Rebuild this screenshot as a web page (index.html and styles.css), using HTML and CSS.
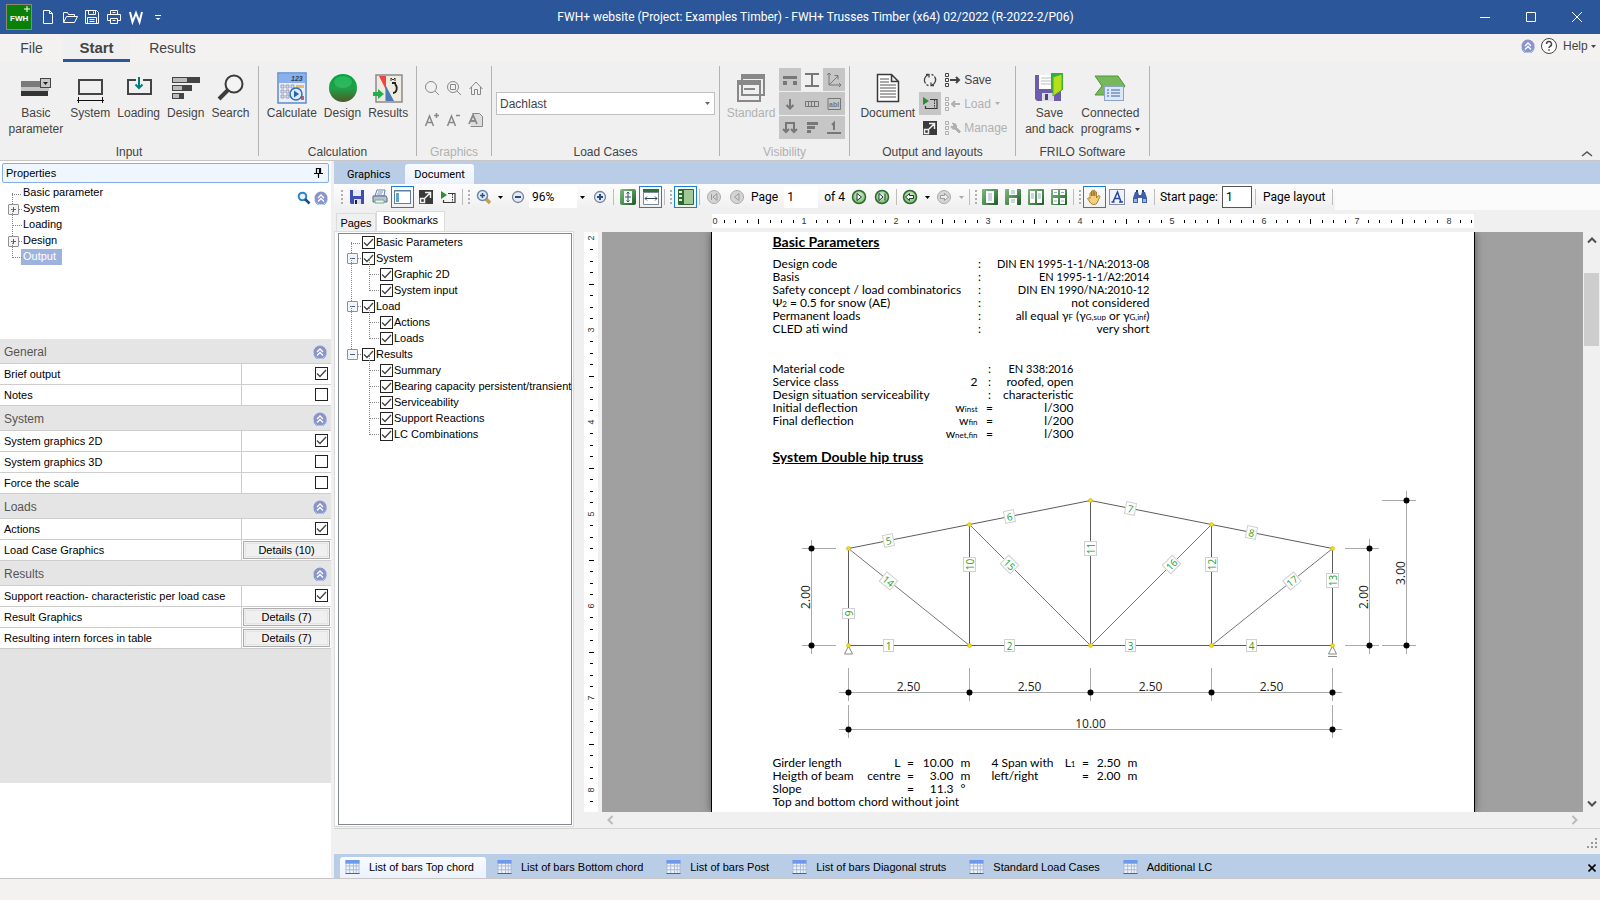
FILE: index.html
```html
<!DOCTYPE html>
<html lang="en">
<head>
    <meta charset="UTF-8">
    <meta name="viewport" content="width=device-width, initial-scale=1.0">
    <title>FWH+ Trusses Timber</title>
    <link rel="stylesheet" href="styles.css">
</head>
<body>
    <!-- shared symbols -->
    <svg class="defs" aria-hidden="true">
        <defs>
            <linearGradient id="gGreen" x1="0" y1="0" x2="1" y2="1"><stop offset="0" stop-color="#7fb87c"/><stop offset=".5" stop-color="#4f9355"/><stop offset="1" stop-color="#1f5524"/></linearGradient>
            <linearGradient id="gBall" x1="0" y1="0" x2="0" y2="1"><stop offset="0" stop-color="#00a43c"/><stop offset=".5" stop-color="#1fa14a"/><stop offset="1" stop-color="#4f5a24"/></linearGradient>
            <radialGradient id="gNav" cx=".5" cy=".4" r=".6"><stop offset="0" stop-color="#e4f5df"/><stop offset="1" stop-color="#6fb85f"/></radialGradient>
        </defs>
        <symbol id="collapse" viewBox="0 0 14 14">
            <circle cx="7" cy="7" r="6.500" fill="#8b93cb"/><path d="M1 9a6 6 0 0 0 12-1" fill="none" stroke="#6fa3dc"/>
            <path d="M4 7l3-3 3 3M4 10.500l3-3 3 3" fill="none" stroke="#fff" stroke-width="1.300"/>
        </symbol>
        <symbol id="sheet" viewBox="0 0 15 15">
            <rect width="15" height="15" fill="#a9b9d6"/><rect width="15" height="4" fill="#6d99ea"/>
            <path d="M1 4h3v2H1zM5 4h3v2H5zM9 4h2v2H9zM12 4h2v2h-2zM1 7h3v3H1zM5 7h3v3H5zM9 7h2v3H9zM12 7h2v3h-2zM1 11h3v3H1zM5 11h3v3H5zM9 11h2v3H9zM12 11h2v3h-2z" fill="#eef3fc"/>
            <path d="M0 14.500h15" stroke="#3c5a8c"/>
        </symbol>
        <symbol id="caret" viewBox="0 0 5 3"><path d="M0 0h5L2.500 3z" fill="currentColor"/></symbol>
        <symbol id="list" viewBox="0 0 14 14">
            <path d="M.5.500h3v3h-3zM.5 5.500h3v3h-3zM.5 10.500h3v3h-3z" fill="none" stroke="currentColor"/>
        </symbol>
        <symbol id="expand" viewBox="0 0 14 14">
            <path d="M0 0h14v14H0z" fill="#3a3a3a"/><path d="M1.500 8.500h4v4h-4zM6 8l5-5M6 2.500h5.500V8" fill="none" stroke="#f0f0f0" stroke-width="1.500"/>
        </symbol>
        <symbol id="screen" viewBox="0 0 15 13">
            <path d="M0 0v8l6-4z" fill="#2f8b37"/><path d="M7 2.500h7v9H2.500V9" fill="none" stroke="#3a3a3a" stroke-width="1.200"/><path d="M11.500 3v8" stroke="#3a3a3a" stroke-dasharray="1.500 1"/>
        </symbol>
    </svg>

    <header class="titlebar">
        <div class="quick">
            <svg class="logo" viewBox="0 0 26 26"><rect x=".5" y=".5" width="25" height="25" fill="#0b8009" stroke="#8a8a72"/><text x="4" y="17" fill="#fff" font-size="8" font-weight="bold">FWH</text><path d="M21 2v6M18 5h6" stroke="#fff"/></svg>
            <button title="New"><svg width="16" height="16" viewBox="0 0 16 16"><path d="M3.500 1.500h6l3 3v10h-9zM9.500 1.500v3h3" /></svg></button>
            <button title="Open"><svg width="16" height="16" viewBox="0 0 16 16"><path d="M1.500 13.500v-10h4l1 2h6v2M1.500 13.500l3-6h11l-3 6z"/></svg></button>
            <button title="Save"><svg width="16" height="16" viewBox="0 0 16 16"><path d="M1.500 1.500h11l2 2v11h-13zM4.500 1.500v4h7v-4M9.500 2.500v2M3.500 14.500v-6h9v6M5.500 10.500h5M5.500 12.500h5"/></svg></button>
            <button title="Print"><svg width="16" height="16" viewBox="0 0 16 16"><path d="M4.500 5.500v-4h7v4M4.500 11.500h-3v-6h13v6h-3M4.500 9.500h7v5h-7zM6.500 11.500h3M6.500 3.500h3"/></svg></button>
            <button title="Word"><svg width="16" height="16" viewBox="0 0 16 16"><path d="M2 3l2.500 10L8 4l3.500 9L14 3" stroke-width="2"/></svg></button>
            <button title="Customize"><svg width="16" height="16" viewBox="0 0 16 16"><path d="M5 6.500h6"/><path d="M5.500 9h5L8 11z" fill="#fff" stroke="none"/></svg></button>
        </div>
        <h1 class="title">FWH+ website (Project: Examples Timber) - FWH+ Trusses Timber (x64) 02/2022 (R-2022-2/P06)</h1>
        <div class="window-buttons">
            <button title="Minimize"><svg width="12" height="12" viewBox="0 0 12 12"><path d="M1 6.500h10"/></svg></button>
            <button title="Maximize"><svg width="12" height="12" viewBox="0 0 12 12"><path d="M1.500 1.500h9v9h-9z"/></svg></button>
            <button title="Close"><svg width="12" height="12" viewBox="0 0 12 12"><path d="M1 1l10 10M11 1L1 11"/></svg></button>
        </div>
    </header>

    <nav class="ribbon-tabs">
        <button>File</button>
        <button class="active">Start</button>
        <button>Results</button>
        <div class="help">
            <svg width="14" height="14"><use href="#collapse"/></svg>
            <svg width="18" height="18" viewBox="0 0 18 18"><circle cx="9" cy="9" r="7.500" fill="#fff" stroke="#444"/><path d="M6.500 7a2.500 2.500 0 1 1 3.500 2.300c-.8.400-1 .7-1 1.700M9 12.300v1.500" fill="none" stroke="#444" stroke-width="1.500"/></svg>
            <button>Help <svg class="caret"><use href="#caret"/></svg></button>
        </div>
    </nav>

    <section class="ribbon">
        <div class="group input">
            <div class="items">
                <button class="big"><svg viewBox="0 0 32 32"><path d="M1 9h19v6H1z" fill="#7a7a7a"/><path d="M1 15h28v4H1z" fill="#c4c4c4"/><path d="M1 19h27v5H1z" fill="#333"/><rect x="20.500" y="6.500" width="10" height="9" fill="#c8c8c8" stroke="#444"/><path d="M23 10h5l-2.500 3z" fill="#222"/></svg>Basic<br>parameter</button>
                <button class="big"><svg viewBox="0 0 32 32"><rect x="5" y="8" width="23" height="14" fill="none" stroke="#444" stroke-width="2"/><path d="M3 28.500h27M4.500 25v6M28.500 25v6" stroke="#111"/></svg>System</button>
                <button class="big"><svg viewBox="0 0 32 32"><path d="M13 8H5v14h23V8h-8" fill="none" stroke="#444" stroke-width="2"/><path d="M16 5v11M12.500 12.500L16 16l3.500-3.500" fill="none" stroke="#007c7c" stroke-width="2"/></svg>Loading</button>
                <button class="big"><svg viewBox="0 0 32 32"><path d="M2 5h28v6H2zM2 13h20v6H2zM2 21h12v6H2z" fill="#444"/><path d="M3 6h14v4H3zM3 14h9v4H3zM3 22h6v4H3z" fill="#bbb"/></svg>Design</button>
                <button class="big"><svg viewBox="0 0 32 32"><circle cx="20" cy="12" r="8.500" fill="#f4f4f4" stroke="#3c3c3c" stroke-width="2"/><path d="M14 18L5 27" stroke="#3c3c3c" stroke-width="4"/></svg>Search</button>
            </div>
            <span class="caption">Input</span>
        </div>
        <div class="group calculation">
            <div class="items">
                <button class="big"><svg viewBox="0 0 32 32"><rect x="2" y="1" width="28" height="30" fill="#e8effa" stroke="#5a8ad0" stroke-width="1.500"/><path d="M3 2h26v9H3z" fill="#8ab1ef"/><text x="15" y="9" font-size="7" font-style="italic" font-weight="bold" fill="#345">123</text><path d="M5 13h3v3H5zM10 13h3v3h-3zM15 13h3v3h-3zM5 18h3v3H5zM10 18h3v3h-3zM5 23h3v3H5zM10 23h3v3h-3z" fill="#dde" stroke="#889" stroke-width=".7"/><path d="M20 13h8v3h-8z" fill="#e9b96e"/><path d="M25 24h3v4h-3z" fill="#d55"/><circle cx="20" cy="22" r="6" fill="#dcecff" stroke="#2e6fb5" stroke-width="1.500"/><path d="M18 18.500v7l5-3.500z" fill="#2864a8"/></svg>Calculate</button>
                <button class="big"><svg viewBox="0 0 32 32"><circle cx="16" cy="16" r="14" fill="url(#gBall)"/><ellipse cx="16" cy="10" rx="9" ry="6" fill="#49d07c" opacity=".45"/></svg>Design</button>
                <button class="big"><svg viewBox="0 0 32 32"><rect x="4" y="3" width="26" height="27" fill="#efebdf" stroke="#8a8a8a" stroke-width="1.500"/><path d="M13.500 3v26" stroke="#aaa"/><path d="M7 4h7v14z" fill="#ef4444"/><path d="M14 14v15h8z" fill="#4a7ab8"/><path d="M19 9V6l2 2 2-2v3" fill="none" stroke="#333"/><path d="M23 12c3 3 2 9-2 9M24 11h-4" fill="none" stroke="#222" stroke-width="1.800"/><path d="M1 20h5v-3l6 5-6 5v-3H1z" fill="#22b04b"/></svg>Results</button>
            </div>
            <span class="caption">Calculation</span>
        </div>
        <div class="group graphics disabled">
            <div class="small-grid">
                <button title="Zoom" disabled><svg width="16" height="16" viewBox="0 0 16 16"><circle cx="7" cy="7" r="5.500"/><path d="M11 11l4 4"/></svg></button>
                <button title="Zoom window" disabled><svg width="16" height="16" viewBox="0 0 16 16"><circle cx="7" cy="7" r="5.500"/><path d="M11 11l4 4M4.500 4.500h5v5h-5z"/></svg></button>
                <button title="Home" disabled><svg width="16" height="16" viewBox="0 0 16 16"><path d="M1.500 9L8 2l6.500 7M3.500 7v7.500h3v-5h3v5h3V7"/></svg></button>
                <button title="Larger font" disabled><svg width="16" height="16" viewBox="0 0 16 16"><path d="M1.500 14l4-10 4 10M3 10.500h5M10 3.500h5M12.500 1v5" stroke-width="1.500"/></svg></button>
                <button title="Smaller font" disabled><svg width="16" height="16" viewBox="0 0 16 16"><path d="M1.500 14l4-10 4 10M3 10.500h5M10 3.500h4" stroke-width="1.500"/></svg></button>
                <button title="Font" disabled><svg width="16" height="16" viewBox="0 0 16 16"><path d="M4.500 1.500h7l3 3v10h-12" fill="#ddd"/><path d="M1 12l4-9 4 9M2.500 9h5" stroke-width="1.800"/></svg></button>
            </div>
            <span class="caption">Graphics</span>
        </div>
        <div class="group cases">
            <select aria-label="Load case"><option>Dachlast</option></select>
            <span class="caption">Load Cases</span>
        </div>
        <div class="group visibility disabled">
            <div class="items">
                <button class="big" disabled><svg viewBox="0 0 32 32"><rect x="7" y="3" width="22" height="20" fill="none" stroke="#888" stroke-width="2"/><path d="M7 5h22" stroke="#888" stroke-width="4"/><rect x="3" y="9" width="22" height="20" fill="none" stroke="#888" stroke-width="2"/><path d="M3 11h22" stroke="#888" stroke-width="4"/><path d="M9 17h11" stroke="#888" stroke-width="2"/></svg>Standard</button>
                <div class="toggles">
                    <button title="Supports" disabled><svg width="16" height="16" viewBox="0 0 16 16"><path d="M1 4h14v3H1zM1 9h4v4H1zM11 9h4v4h-4z" fill="#777" stroke="none"/></svg></button>
                    <button class="off" title="Section" disabled><svg width="16" height="16" viewBox="0 0 16 16"><path d="M1 2h14M1 14h14M8 2v12" stroke-width="2"/></svg></button>
                    <button title="Axes" disabled><svg width="16" height="16" viewBox="0 0 16 16"><path d="M3 1v12h12M1 3l2-2 2 2M13 11l2 2-2 2M3 13l9-9M8.500 3.500H12v4"/></svg></button>
                    <button title="Load" disabled><svg width="16" height="16" viewBox="0 0 16 16"><path d="M8 3v10M4.500 9L8 12.500 11.500 9" stroke-width="2"/></svg></button>
                    <button title="Dimensions" disabled><svg width="16" height="16" viewBox="0 0 16 16"><path d="M1.500 5.500h13v5h-13zM4.500 6v4M7.500 6v4M10.500 6v4"/></svg></button>
                    <button title="Labels" disabled><svg width="16" height="16" viewBox="0 0 16 16"><path d="M2 2.500h12.500v11H2z"/><text x="3" y="11" font-size="7" font-weight="bold">abl</text></svg></button>
                    <button title="Reactions" disabled><svg width="16" height="16" viewBox="0 0 16 16"><path d="M4 10V3h8v7M1 9l3 3 3-3M9 9l3 3 3-3" stroke-width="2"/></svg></button>
                    <button title="Results" disabled><svg width="16" height="16" viewBox="0 0 16 16"><path d="M3 2h11v3H3zM3 6h8v3H3zM3 10h4v3H3z" fill="#777" stroke="none"/></svg></button>
                    <button title="Numbers" disabled><svg width="16" height="16" viewBox="0 0 16 16"><path d="M1 13h14M6 5l2-2v7" stroke-width="2"/></svg></button>
                </div>
            </div>
            <span class="caption">Visibility</span>
        </div>
        <div class="group output">
            <div class="items">
                <button class="big"><svg viewBox="0 0 32 32"><path d="M5.500 2.500h14l7 7v20h-21zM19.500 2.500v7h7" fill="#fff" stroke="#3a3a3a" stroke-width="1.500"/><path d="M8 7h9M8 10h9M8 13h16M8 16h16M8 19h16M8 22h16M8 25h16" stroke="#555"/></svg>Document</button>
                <div class="icon-col">
                    <button title="Refresh"><svg width="16" height="16" viewBox="0 0 16 16"><path d="M3.500 11.500A5.500 5.500 0 0 1 6 3M12.500 4.500A5.500 5.500 0 0 1 10 13M4 2.500h3v3M12 13.500H9v-3M9.500 2.500a5.500 5.500 0 0 1 2 1M6.500 13.500a5.500 5.500 0 0 1-2-1" fill="none" stroke="#444" stroke-width="1.300"/></svg></button>
                    <button class="on" title="Preview"><svg width="15" height="13"><use href="#screen"/></svg></button>
                    <button title="Window"><svg width="14" height="14"><use href="#expand"/></svg></button>
                </div>
                <div class="layout-col">
                    <button><svg width="14" height="14"><use href="#list"/></svg><svg width="12" height="12" viewBox="0 0 12 12"><path d="M0 6h9M6 3l3 3-3 3" fill="none" stroke="currentColor" stroke-width="2"/></svg>Save</button>
                    <button disabled><svg width="14" height="14"><use href="#list"/></svg><svg width="12" height="12" viewBox="0 0 12 12"><path d="M10 6H2M5 3L2 6l3 3" fill="none" stroke="currentColor" stroke-width="2"/></svg>Load <svg class="caret"><use href="#caret"/></svg></button>
                    <button disabled><svg width="14" height="14"><use href="#list"/></svg><svg width="12" height="12" viewBox="0 0 12 12"><path d="M2 1l2 2-2 2-1-1a3 3 0 0 0 4 3l4 4 1.500-1.500-4-4a3 3 0 0 0-3.500-4z" fill="currentColor" stroke="currentColor"/></svg>Manage</button>
                </div>
            </div>
            <span class="caption">Output and layouts</span>
        </div>
        <div class="group frilo">
            <div class="items">
                <button class="big"><svg viewBox="0 0 32 32"><path d="M2 3h26v26H4l-2-2z" fill="#6d5cae"/><path d="M6 3h14v14H6z" fill="#fff"/><path d="M8 6h10M8 9h10M8 12h10" stroke="#bbb"/><path d="M9 21h12v8H9z" fill="#ddd"/><path d="M12 22h3v6h-3z" fill="#4d3f8e"/><path d="M18 1h12v17H18z" fill="#27b04b"/><path d="M20 5l9-3v16l-9 6z" fill="#b3e018" stroke="#4fae20"/></svg>Save<br>and back</button>
                <button class="big"><svg viewBox="0 0 32 32"><path d="M1 4h23l7 10-7 9H1l7-9z" fill="#77b85b" stroke="#4e963a"/><rect x="10.500" y="14.500" width="19" height="14" fill="#dbe7f5" stroke="#8aa4c8"/><path d="M13 18h2M13 21h2M13 24h2M17 18h9M17 21h9M17 24h9" stroke="#3f62a5" stroke-width="1.200"/></svg>Connected<br><span>programs <svg class="caret"><use href="#caret"/></svg></span></button>
            </div>
            <span class="caption">FRILO Software</span>
        </div>
        <button class="fold" title="Collapse the ribbon"><svg width="12" height="8" viewBox="0 0 12 8"><path d="M1 6l5-4 5 4" fill="none" stroke="#555" stroke-width="1.500"/></svg></button>
    </section>

    <main class="main">
        <aside class="properties">
            <div class="panel-head"><span>Properties</span><svg width="9" height="12" viewBox="0 0 9 12"><path d="M2.500 6V1.500h4V6M5.500 1.500V6M0 6.500h9M4.500 7v4" fill="none" stroke="#000" stroke-width="1.200"/></svg></div>
            <div class="tree-box">
                <ul class="nav-tree">
                    <li>Basic parameter</li>
                    <li class="plus">System</li>
                    <li>Loading</li>
                    <li class="plus">Design</li>
                    <li><span class="selected">Output</span></li>
                </ul>
                <div class="tree-tools">
                    <svg width="14" height="14" viewBox="0 0 14 14"><circle cx="5.500" cy="5.500" r="3.800" fill="#e8f2fb" stroke="#2f82c4" stroke-width="2"/><path d="M8 8l4.500 4.500" stroke="#1d4a8c" stroke-width="2.500"/></svg>
                    <svg width="14" height="14"><use href="#collapse"/></svg>
                </div>
            </div>
            <div class="settings">
                <h2>General <svg width="14" height="14"><use href="#collapse"/></svg></h2>
                <div class="row"><label for="brief">Brief output</label><div><input type="checkbox" id="brief" checked></div></div>
                <div class="row"><label for="notes">Notes</label><div><input type="checkbox" id="notes"></div></div>
                <h2>System <svg width="14" height="14"><use href="#collapse"/></svg></h2>
                <div class="row"><label for="g2d">System graphics 2D</label><div><input type="checkbox" id="g2d" checked></div></div>
                <div class="row"><label for="g3d">System graphics 3D</label><div><input type="checkbox" id="g3d"></div></div>
                <div class="row"><label for="scale">Force the scale</label><div><input type="checkbox" id="scale"></div></div>
                <h2>Loads <svg width="14" height="14"><use href="#collapse"/></svg></h2>
                <div class="row"><label for="actions">Actions</label><div><input type="checkbox" id="actions" checked></div></div>
                <div class="row"><label for="lcg">Load Case Graphics</label><div><button id="lcg">Details (10)</button></div></div>
                <h2>Results <svg width="14" height="14"><use href="#collapse"/></svg></h2>
                <div class="row"><label for="support">Support reaction- characteristic per load case</label><div><input type="checkbox" id="support" checked></div></div>
                <div class="row"><label for="rg">Result Graphics</label><div><button id="rg">Details (7)</button></div></div>
                <div class="row"><label for="rf">Resulting intern forces in table</label><div><button id="rf">Details (7)</button></div></div>
            </div>
            <div class="hint"></div>
        </aside>

        <section class="workspace">
            <nav class="view-tabs">
                <button>Graphics</button>
                <button class="active">Document</button>
            </nav>

            <div class="toolbar-row">
                <div class="toolbar">
                    <i class="grip"></i>
                    <button title="Save"><svg width="16" height="16" viewBox="0 0 16 16"><path d="M1 1h14v14H2l-1-1z" fill="#3d4fb0"/><path d="M4 1h8v6H4z" fill="#e6eaf8"/><path d="M5 10h7v5H5z" fill="#dde"/><path d="M6 11h2v4H6z" fill="#223"/></svg></button>
                    <button title="Print"><svg width="16" height="16" viewBox="0 0 16 16"><path d="M5 1h8l-1 6H3z" fill="#fff" stroke="#6b7fa3"/><path d="M1 7h13l1 2v4H1z" fill="#b9c2d2" stroke="#5a6a88"/><path d="M3 11h9v3H3z" fill="#f4f4f4" stroke="#7a8"/><path d="M6 3h5M5 5h5" stroke="#6a90c8"/></svg></button>
                    <button class="on" title="Panel"><svg width="17" height="16" viewBox="0 0 17 16"><rect x=".5" y="1.500" width="16" height="13" fill="#fff" stroke="#5f7f9e"/><path d="M1 2h15v1H1z" fill="#a9c0d8"/><path d="M2 4h3v9H2z" fill="#5ea7cc"/></svg></button>
                    <button title="Window"><svg width="14" height="14"><use href="#expand"/></svg></button>
                    <button title="Preview"><svg width="15" height="13"><use href="#screen"/></svg></button>
                    <i class="sep"></i><i class="grip"></i>
                    <button title="Zoom"><svg width="16" height="16" viewBox="0 0 16 16"><path d="M9 9l5 5" stroke="#c9a04a" stroke-width="3.500"/><circle cx="6.500" cy="6.500" r="5" fill="#dfeaf8" stroke="#6f87a8" stroke-width="1.500"/><path d="M4 6.500h5M6.500 4v5" stroke="#2f4f8c" stroke-width="1.500"/></svg></button>
                    <svg class="caret"><use href="#caret"/></svg>
                    <button title="Zoom out"><svg width="14" height="14" viewBox="0 0 14 14"><circle cx="7" cy="7" r="5.500" fill="#e3ebf6" stroke="#7a8496" stroke-width="1.300"/><path d="M4 7h6" stroke="#2b4a88" stroke-width="2"/></svg></button>
                    <input class="zoom" aria-label="Zoom level" value="96%">
                    <svg class="caret"><use href="#caret"/></svg>
                    <button title="Zoom in"><svg width="14" height="14" viewBox="0 0 14 14"><circle cx="7" cy="7" r="5.500" fill="#e3ebf6" stroke="#7a8496" stroke-width="1.300"/><path d="M4 7h6M7 4v6" stroke="#2b4a88" stroke-width="2"/></svg></button>
                    <i class="sep"></i>
                    <button title="Fit page"><svg width="16" height="16" viewBox="0 0 16 16"><rect width="16" height="16" rx="2" fill="url(#gGreen)"/><path d="M4 2h8v12H4z" fill="#f3f6f1"/><path d="M8 3v10M5 8h6M6.500 4.500L8 3l1.500 1.500M6.500 11.500L8 13l1.500-1.500" fill="none" stroke="#357"/></svg></button>
                    <button class="on" title="Fit width"><svg width="16" height="16" viewBox="0 0 16 16"><rect width="16" height="4" fill="#2f7036"/><path d="M.5 3.500h15v12H.500z" fill="#fff" stroke="#7a8a98"/><path d="M2 9.500h12M4 7.500l-2 2 2 2M12 7.500l2 2-2 2" fill="none" stroke="#345"/></svg></button>
                    <i class="sep"></i><i class="grip"></i>
                    <button class="on" title="Thumbnails"><svg width="16" height="16" viewBox="0 0 16 16"><rect width="16" height="16" rx="1" fill="#2c6a33"/><path d="M6 1h9v14H6z" fill="#9fca98"/><path d="M1 2h3v2H1zM1 6h3v2H1zM1 10h3v2H1z" fill="#dfeeda"/></svg></button>
                    <i class="sep"></i>
                    <button title="First page" disabled><svg width="16" height="16" viewBox="0 0 16 16"><circle cx="8" cy="8" r="6.500" fill="#d5d5d5" stroke="#aaa"/><path d="M5.500 5v6M11 4.500v7L7 8z" fill="none" stroke="#999"/></svg></button>
                    <button title="Previous page" disabled><svg width="16" height="16" viewBox="0 0 16 16"><circle cx="8" cy="8" r="6.500" fill="#d5d5d5" stroke="#aaa"/><path d="M10 4.500v7L5.500 8z" fill="none" stroke="#999"/></svg></button>
                    <label for="page">Page</label>
                    <input class="page-no" id="page" value="1">
                    <span>of 4</span>
                    <button title="Next page"><svg width="16" height="16" viewBox="0 0 16 16"><circle cx="8" cy="8" r="6.500" fill="url(#gNav)" stroke="#2c6b2c" stroke-width="1.500"/><path d="M6 4.500v7L10.500 8z" fill="#fff" stroke="#234"/></svg></button>
                    <button title="Last page"><svg width="16" height="16" viewBox="0 0 16 16"><circle cx="8" cy="8" r="6.500" fill="url(#gNav)" stroke="#2c6b2c" stroke-width="1.500"/><path d="M5 4.500v7L9 8zM11 4.500v7" fill="#fff" stroke="#234"/></svg></button>
                    <i class="sep"></i>
                    <button title="Back"><svg width="16" height="16" viewBox="0 0 16 16"><circle cx="8" cy="8" r="6.500" fill="url(#gNav)" stroke="#2c6b2c" stroke-width="1.500"/><path d="M3.500 8L7.500 4.500v2h4v3h-4v2z" fill="#fff" stroke="#234"/></svg></button>
                    <svg class="caret"><use href="#caret"/></svg>
                    <button title="Forward" disabled><svg width="16" height="16" viewBox="0 0 16 16"><circle cx="8" cy="8" r="6.500" fill="#d5d5d5" stroke="#aaa"/><path d="M12.500 8l-4-3.500v2h-4v3h4v2z" fill="#eee" stroke="#999"/></svg></button>
                    <svg class="caret off"><use href="#caret"/></svg>
                    <i class="sep"></i><i class="grip"></i>
                    <button title="Single page"><svg width="16" height="16" viewBox="0 0 16 16"><rect width="16" height="16" rx="1" fill="url(#gGreen)"/><path d="M4 2h8v12H4z" fill="#fff"/><path d="M6 5h4M6 7h4M6 9h4M6 11h4" stroke="#9ab"/></svg></button>
                    <button title="Continuous"><svg width="16" height="16" viewBox="0 0 16 16"><rect width="16" height="16" rx="1" fill="url(#gGreen)"/><path d="M4 0h8v6H4zM4 9h8v7H4z" fill="#fff"/><path d="M6 2h4M6 4h4M6 11h4M6 13h4" stroke="#9ab"/></svg></button>
                    <button title="Two pages"><svg width="16" height="16" viewBox="0 0 16 16"><rect width="16" height="16" rx="1" fill="url(#gGreen)"/><path d="M2 2h5v12H2zM9 2h5v12H9z" fill="#fff"/><path d="M3 5h3M3 7h3M3 9h3M10 5h3M10 7h3M10 9h3" stroke="#9ab"/></svg></button>
                    <button title="Two pages continuous"><svg width="16" height="16" viewBox="0 0 16 16"><rect width="16" height="16" rx="1" fill="url(#gGreen)"/><path d="M2 1h5v5H2zM9 1h5v5H9zM2 9h5v6H2zM9 9h5v6H9z" fill="#fff"/><path d="M3 3.500h3M10 3.500h3M3 12h3M10 12h3" stroke="#9ab"/></svg></button>
                    <i class="sep"></i><i class="grip"></i>
                    <button class="on" title="Hand"><svg width="16" height="16" viewBox="0 0 16 16"><path d="M4 9V4q1-1 1.500 0v3V2q1-1 1.600 0v5V1.500q1-1 1.700 0V7 3q1-1 1.700 0v6l1.500-2q1.500-1 2 .500L11 14q-1 1.500-3 1.500T4.500 14L1.500 9.500q1-1.500 2.500 0z" fill="#f6cf7a" stroke="#9b6a1c" stroke-width=".8"/></svg></button>
                    <button title="Select text"><svg width="16" height="16" viewBox="0 0 16 16"><rect x=".5" y=".5" width="15" height="15" fill="#eef3fb" stroke="#225" stroke-dasharray="1 1"/><path d="M4 13l4.500-10 3.500 10M6 9.500h5M2.500 13h3M10 13h4" fill="none" stroke="#27479a" stroke-width="1.500"/></svg></button>
                    <button title="Find"><svg width="16" height="16" viewBox="0 0 16 16"><path d="M3 3h3l1 3h2l1-3h3l2 6v5h-5V9H6v5H1V9z" fill="#3f5fa6"/><path d="M2 10h3v3H2zM11 10h3v3h-3z" fill="#9fb6e2"/><path d="M4 1h2v2H4zM10 1h2v2h-2z" fill="#27407c"/></svg></button>
                    <i class="sep"></i>
                    <label for="start">Start page:</label>
                    <input class="start-no" id="start" value="1">
                    <i class="sep"></i>
                    <button class="text">Page layout</button>
                    <i class="sep"></i>
                </div>
            </div>

            <div class="content">
                <div class="bookmarks">
                    <nav class="side-tabs"><button>Pages</button><button class="active">Bookmarks</button></nav>
                    <div class="side-frame">
                        <ul class="mark-tree">
                            <li><label><input type="checkbox" checked>Basic Parameters</label></li>
                            <li class="minus"><label><input type="checkbox" checked>System</label>
                                <ul>
                                    <li><label><input type="checkbox" checked>Graphic 2D</label></li>
                                    <li><label><input type="checkbox" checked>System input</label></li>
                                </ul>
                            </li>
                            <li class="minus"><label><input type="checkbox" checked>Load</label>
                                <ul>
                                    <li><label><input type="checkbox" checked>Actions</label></li>
                                    <li><label><input type="checkbox" checked>Loads</label></li>
                                </ul>
                            </li>
                            <li class="minus"><label><input type="checkbox" checked>Results</label>
                                <ul>
                                    <li><label><input type="checkbox" checked>Summary</label></li>
                                    <li><label><input type="checkbox" checked>Bearing capacity persistent/transient</label></li>
                                    <li><label><input type="checkbox" checked>Serviceability</label></li>
                                    <li><label><input type="checkbox" checked>Support Reactions</label></li>
                                    <li><label><input type="checkbox" checked>LC Combinations</label></li>
                                </ul>
                            </li>
                        </ul>
                    </div>
                </div>

                <div class="preview">
                    <div class="ruler-h">
                        <svg width="762" height="14" viewBox="0 0 762 14">
                            <defs><pattern id="tickH" width="92" height="14" patternUnits="userSpaceOnUse"><path d="M12.500 6v3M23.500 6v3M35.500 6v3M46.500 5v5M58.500 6v3M69.500 6v3M81.500 6v3" stroke="#000"/></pattern></defs>
                            <rect width="762" height="14" fill="#fff"/><rect width="762" height="14" fill="url(#tickH)"/>
                            <g font-size="9" text-anchor="middle" fill="#333"><text x="3" y="10">0</text><text x="92" y="10">1</text><text x="184" y="10">2</text><text x="276" y="10">3</text><text x="368" y="10">4</text><text x="460" y="10">5</text><text x="552" y="10">6</text><text x="645" y="10">7</text><text x="737" y="10">8</text></g>
                        </svg>
                    </div>
                    <div class="ruler-v">
                        <svg width="14" height="100%">
                            <defs><pattern id="tickV" y="6" width="14" height="92" patternUnits="userSpaceOnUse"><path d="M6 11.500h3M6 23.500h3M6 34.500h3M5 46.500h5M6 57.500h3M6 69.500h3M6 80.500h3" stroke="#000"/></pattern></defs>
                            <rect width="14" height="100%" fill="#fff"/><rect width="14" height="100%" fill="url(#tickV)"/>
                            <g font-size="9" text-anchor="middle" fill="#333"><text transform="translate(10 6) rotate(-90)">2</text><text transform="translate(10 98) rotate(-90)">3</text><text transform="translate(10 190) rotate(-90)">4</text><text transform="translate(10 282) rotate(-90)">5</text><text transform="translate(10 374) rotate(-90)">6</text><text transform="translate(10 466) rotate(-90)">7</text><text transform="translate(10 558) rotate(-90)">8</text></g>
                        </svg>
                    </div>
                    <div class="canvas">
                        <article class="sheet">
                            <h3>Basic Parameters</h3>
                            <table class="t-basic">
                                <colgroup><col class="c-label"><col class="c-sign"><col class="c-value"></colgroup>
                                <tr><td>Design code</td><td>:</td><td class="code">DIN EN 1995-1-1/NA:2013-08</td></tr>
                                <tr><td>Basis</td><td>:</td><td class="code">EN 1995-1-1/A2:2014</td></tr>
                                <tr><td>Safety concept / load combinatorics</td><td>:</td><td class="code">DIN EN 1990/NA:2010-12</td></tr>
                                <tr><td>Ψ<small>2</small> = 0.5 for snow (AE)</td><td>:</td><td>not considered</td></tr>
                                <tr><td>Permanent loads</td><td>:</td><td>all equal γ<small>F</small> (γ<small>G,sup</small> or γ<small>G,inf</small>)</td></tr>
                                <tr><td>CLED ati wind</td><td>:</td><td>very short</td></tr>
                            </table>
                            <table class="t-material">
                                <colgroup><col class="c-label"><col class="c-symbol"><col class="c-sign"><col class="c-value"></colgroup>
                                <tr><td>Material code</td><td></td><td>:</td><td class="code">EN 338:2016</td></tr>
                                <tr><td>Service class</td><td>2</td><td>:</td><td>roofed, open</td></tr>
                                <tr><td>Design situation serviceability</td><td></td><td>:</td><td>characteristic</td></tr>
                                <tr><td>Initial deflection</td><td>w<small>inst</small></td><td>=</td><td>l/300</td></tr>
                                <tr><td>Final deflection</td><td>w<small>fin</small></td><td>=</td><td>l/200</td></tr>
                                <tr><td></td><td>w<small>net,fin</small></td><td>=</td><td>l/300</td></tr>
                            </table>
                            <h3>System Double hip truss</h3>
                            <svg class="truss" width="660" height="278" viewBox="785 476 660 278">
                                <g stroke="#5c5c5c" fill="none">
                                    <path d="M848.500 645.500H1332.500M848.500 548.500V645.500M969.500 524.500V645.500M1090.500 500.500V645.500M1211.500 524.500V645.500M1332.500 548.500V645.500"/>
                                    <path d="M848.500 548.500L1090.500 500.500 1332.500 548.500"/>
                                    <path d="M848.500 548.500L969.500 645.500M969.500 524.500L1090.500 645.500 1211.500 524.500M1211.500 645.500L1332.500 548.500" stroke="#777"/>
                                    <path d="M848.500 646l-4 8h8zM1332.500 646l-4 8h8zM1328 656.500h9" stroke="#888"/>
                                </g>
                                <g stroke="#aaa" fill="none">
                                    <path d="M811.500 540V654M802 548.500H836M802 645.500H836"/>
                                    <path d="M1369.500 539V654M1345 548.500H1379M1345 645.500H1379"/>
                                    <path d="M1406.500 491V654M1382 500.500H1416M1382 645.500H1416"/>
                                    <path d="M839 692.500H1342M848.500 668V701M969.500 668V701M1090.500 668V701M1211.500 668V701M1332.500 668V701"/>
                                    <path d="M839 729.500H1342M848.500 705V738M1332.500 705V738"/>
                                </g>
                                <g fill="#000">
                                    <circle cx="811.500" cy="548.500" r="3"/><circle cx="811.500" cy="645.500" r="3"/>
                                    <circle cx="1369.500" cy="548.500" r="3"/><circle cx="1369.500" cy="645.500" r="3"/>
                                    <circle cx="1406.500" cy="500.500" r="3"/><circle cx="1406.500" cy="645.500" r="3"/>
                                    <circle cx="848.500" cy="692.500" r="3"/><circle cx="969.500" cy="692.500" r="3"/><circle cx="1090.500" cy="692.500" r="3"/><circle cx="1211.500" cy="692.500" r="3"/><circle cx="1332.500" cy="692.500" r="3"/>
                                    <circle cx="848.500" cy="729.500" r="3"/><circle cx="1332.500" cy="729.500" r="3"/>
                                </g>
                                <g fill="#f7dc10" stroke="#c9a800" stroke-width=".5">
                                    <circle cx="848.500" cy="548.500" r="2"/><circle cx="969.500" cy="524.500" r="2"/><circle cx="1090.500" cy="500.500" r="2"/><circle cx="1211.500" cy="524.500" r="2"/><circle cx="1332.500" cy="548.500" r="2"/>
                                    <circle cx="848.500" cy="645.500" r="2"/><circle cx="969.500" cy="645.500" r="2"/><circle cx="1090.500" cy="645.500" r="2"/><circle cx="1211.500" cy="645.500" r="2"/><circle cx="1332.500" cy="645.500" r="2"/>
                                </g>
                                <g class="dim">
                                    <text x="908.500" y="691">2.50</text><text x="1029.500" y="691">2.50</text><text x="1150.500" y="691">2.50</text><text x="1271.500" y="691">2.50</text><text x="1090.500" y="728">10.00</text>
                                    <text transform="translate(810 597) rotate(-90)">2.00</text><text transform="translate(1368 597) rotate(-90)">2.00</text><text transform="translate(1405 573) rotate(-90)">3.00</text>
                                </g>
                                <g class="bar">
                                    <g transform="translate(888.500 645.500)"><rect x="-5" y="-6" width="10" height="12"/><text y="4">1</text></g>
                                    <g transform="translate(1009.500 645.500)"><rect x="-5" y="-6" width="10" height="12"/><text y="4">2</text></g>
                                    <g transform="translate(1130.500 645.500)"><rect x="-5" y="-6" width="10" height="12"/><text y="4">3</text></g>
                                    <g transform="translate(1251.500 645.500)"><rect x="-5" y="-6" width="10" height="12"/><text y="4">4</text></g>
                                    <g transform="translate(888.500 540.500) rotate(-11)"><rect x="-5" y="-6" width="10" height="12"/><text y="4">5</text></g>
                                    <g transform="translate(1009.500 516.500) rotate(-11)"><rect x="-5" y="-6" width="10" height="12"/><text y="4">6</text></g>
                                    <g transform="translate(1130.500 508.500) rotate(11)"><rect x="-5" y="-6" width="10" height="12"/><text y="4">7</text></g>
                                    <g transform="translate(1251.500 532.500) rotate(11)"><rect x="-5" y="-6" width="10" height="12"/><text y="4">8</text></g>
                                    <g transform="translate(848.500 613.500) rotate(-90)"><rect x="-5" y="-6" width="10" height="12"/><text y="4">9</text></g>
                                    <g transform="translate(969.500 564.500) rotate(-90)"><rect x="-7" y="-6" width="14" height="12"/><text y="4">10</text></g>
                                    <g transform="translate(1090.500 548.500) rotate(-90)"><rect x="-7" y="-6" width="14" height="12"/><text y="4">11</text></g>
                                    <g transform="translate(1211.500 564.500) rotate(-90)"><rect x="-7" y="-6" width="14" height="12"/><text y="4">12</text></g>
                                    <g transform="translate(1332.500 580.500) rotate(-90)"><rect x="-7" y="-6" width="14" height="12"/><text y="4">13</text></g>
                                    <g transform="translate(888.500 581) rotate(39)"><rect x="-7" y="-6" width="14" height="12"/><text y="4">14</text></g>
                                    <g transform="translate(1009.500 564.500) rotate(45)"><rect x="-7" y="-6" width="14" height="12"/><text y="4">15</text></g>
                                    <g transform="translate(1171.500 564.500) rotate(-45)"><rect x="-7" y="-6" width="14" height="12"/><text y="4">16</text></g>
                                    <g transform="translate(1292 581) rotate(-39)"><rect x="-7" y="-6" width="14" height="12"/><text y="4">17</text></g>
                                </g>
                            </svg>
                            <table class="t-girder">
                                <colgroup><col class="g1"><col class="g2"><col class="g3"><col class="g4"><col class="g5"><col class="g6"><col class="g7"><col class="g3"><col class="g8"><col class="g3"></colgroup>
                                <tr><td>Girder length</td><td>L</td><td>=</td><td>10.00</td><td>m</td><td>4 Span with</td><td>L<small>1</small></td><td>=</td><td>2.50</td><td>m</td></tr>
                                <tr><td>Heigth of beam</td><td>centre</td><td>=</td><td>3.00</td><td>m</td><td>left/right</td><td></td><td>=</td><td>2.00</td><td>m</td></tr>
                                <tr><td>Slope</td><td></td><td>=</td><td>11.3</td><td>°</td><td></td><td></td><td></td><td></td><td></td></tr>
                                <tr><td colspan="10">Top and bottom chord without joint</td></tr>
                            </table>
                        </article>
                    </div>
                    <div class="scroll-v">
                        <svg width="10" height="7" viewBox="0 0 10 7"><path d="M1 5.500l4-4 4 4" fill="none" stroke="#505050" stroke-width="2"/></svg>
                        <div class="thumb"></div>
                        <svg width="10" height="7" viewBox="0 0 10 7"><path d="M1 1.500l4 4 4-4" fill="none" stroke="#505050" stroke-width="2"/></svg>
                    </div>
                    <div class="scroll-h">
                        <svg width="7" height="10" viewBox="0 0 7 10"><path d="M5.500 1l-4 4 4 4" fill="none" stroke="#bbb" stroke-width="2"/></svg>
                        <svg width="7" height="10" viewBox="0 0 7 10"><path d="M1.500 1l4 4-4 4" fill="none" stroke="#bbb" stroke-width="2"/></svg>
                    </div>
                </div>
            </div>

            <div class="size-grip"><svg width="11" height="11" viewBox="0 0 11 11"><path d="M8 0h2v2H8zM8 4h2v2H8zM8 8h2v2H8zM4 4h2v2H4zM4 8h2v2H4zM0 8h2v2H0z" fill="#999"/></svg></div>

            <nav class="list-tabs">
                <button class="active"><svg width="15" height="14"><use href="#sheet"/></svg>List of bars Top chord</button>
                <button><svg width="15" height="14"><use href="#sheet"/></svg>List of bars Bottom chord</button>
                <button><svg width="15" height="14"><use href="#sheet"/></svg>List of bars Post</button>
                <button><svg width="15" height="14"><use href="#sheet"/></svg>List of bars Diagonal struts</button>
                <button><svg width="15" height="14"><use href="#sheet"/></svg>Standard Load Cases</button>
                <button><svg width="15" height="14"><use href="#sheet"/></svg>Additional LC</button>
                <button class="close" title="Close"><svg width="8" height="8" viewBox="0 0 8 8"><path d="M.5.500l7 7M7.500.500l-7 7" stroke="#000" stroke-width="1.600"/></svg></button>
            </nav>
        </section>
    </main>
    <footer class="status"></footer>
</body>
</html>
```
FILE: styles.css
```css
* {
    padding: 0;
    margin: 0;
    box-sizing: border-box;
}
body {
    display: flex;
    flex-direction: column;
    height: 100vh;
    overflow: hidden;
    font-family: "Liberation Sans", Arial, sans-serif;
    font-size: 11px;
    color: #000;
    background: #f0f0f0;
}
button, input, select {
    font: inherit;
    color: inherit;
    background: none;
    border: none;
    border-radius: 0;
}
svg {
    flex: none;
    display: block;
}
ul {
    list-style: none;
}
.defs {
    position: absolute;
    width: 0;
    height: 0;
}
.caret {
    width: 5px;
    height: 3px;
    display: inline-block;
    vertical-align: middle;
}

/* title bar */
.titlebar {
    height: 34px;
    flex: none;
    display: flex;
    align-items: center;
    background: #2b579a;
    color: #fff;
}
.quick {
    display: flex;
    align-items: center;
    padding-left: 6px;
}
.quick button {
    width: 22px;
    display: flex;
    justify-content: center;
}
.quick button svg, .window-buttons svg {
    fill: none;
    stroke: #fff;
}
.logo {
    width: 26px;
    height: 26px;
    margin-right: 5px;
}
.title {
    flex: 1;
    text-align: center;
    font: 12px Roboto, sans-serif;
    white-space: nowrap;
}
.window-buttons {
    display: flex;
}
.window-buttons button {
    width: 46px;
    height: 34px;
    display: flex;
    justify-content: center;
    align-items: center;
}

/* ribbon */
.ribbon-tabs {
    height: 28px;
    flex: none;
    display: flex;
    background: #f3f2f1;
    color: #444;
    font-size: 14px;
}
.ribbon-tabs > button {
    width: 63px;
    padding-top: 2px;
    border-bottom: 3px solid transparent;
}
.ribbon-tabs > button.active {
    width: 67px;
    font-size: 15px;
    font-weight: bold;
    background: #f0f0f0;
    border-bottom-color: #2b579a;
}
.ribbon-tabs > button:nth-child(3) {
    width: 85px;
}
.help {
    margin-left: auto;
    padding: 0 4px 5px 0;
    display: flex;
    align-items: center;
    gap: 5px;
    font-size: 12px;
}
.ribbon {
    height: 99px;
    flex: none;
    display: flex;
    padding-top: 4px;
    border-bottom: 1px solid #c8c6c4;
    color: #444;
    font-size: 12px;
}
.group {
    display: flex;
    flex-direction: column;
    align-items: center;
    height: 90px;
    padding: 0 4px;
    border-right: 1px solid #b5b3b1;
}
.items {
    flex: 1;
    display: flex;
    gap: 1px;
}
.caption {
    line-height: 14px;
    height: 11px;
    white-space: nowrap;
}
.input { width: 259px; }
.calculation { width: 158px; }
.graphics { width: 75px; }
.cases { width: 228px; }
.visibility { width: 130px; }
.output { width: 166px; }
.frilo { width: 134px; }
.big {
    display: flex;
    flex-direction: column;
    align-items: center;
    padding: 6px 3px 0;
    line-height: 16px;
    white-space: nowrap;
}
.big > svg {
    width: 32px;
    height: 32px;
    margin-bottom: 1px;
}
.disabled, button:disabled {
    color: #b0b0b0;
}
.small-grid {
    flex: 1;
    display: grid;
    grid-template-columns: repeat(3, 22px);
    grid-template-rows: 32px 32px;
    padding-top: 6px;
}
.small-grid button, .toggles button, .icon-col button {
    display: flex;
    align-items: center;
    justify-content: center;
}
.small-grid svg {
    fill: none;
    stroke: #888;
}
.cases select {
    appearance: none;
    width: 100%;
    height: 23px;
    margin: 26px 0 30px;
    padding: 0 3px;
    border: 1px solid #c0c0c0;
    background: #fff url("data:image/svg+xml,%3Csvg xmlns='http://www.w3.org/2000/svg' width='5' height='3'%3E%3Cpath d='M0 0h5L2.5 3z' fill='%23666'/%3E%3C/svg%3E") no-repeat right 4px center;
}
.toggles {
    display: grid;
    grid-template-columns: repeat(3, 22px);
    grid-auto-rows: 23px;
    row-gap: 1px;
    padding-top: 2px;
}
.toggles button {
    background: #c6c6c6;
}
.toggles button.off {
    background: none;
}
.toggles svg {
    fill: none;
    stroke: #777;
}
.toggles text {
    fill: #777;
    stroke: none;
}
.icon-col, .layout-col {
    display: grid;
    grid-auto-rows: 23px;
    row-gap: 1px;
    padding-top: 2px;
}
.icon-col button {
    width: 22px;
}
.icon-col .on {
    background: #c6c6c6;
}
.layout-col button {
    display: flex;
    align-items: center;
    padding-left: 3px;
}
.layout-col button svg:nth-child(2) {
    margin: 0 2px 0 -9px;
}
.layout-col .caret {
    margin-left: 4px;
}
.fold {
    margin: auto 7px 2px auto;
}

/* properties panel */
.main {
    flex: 1;
    min-height: 0;
    display: flex;
    gap: 3px;
}
.properties {
    width: 331px;
    flex: none;
    display: flex;
    flex-direction: column;
    background: #fff;
}
.panel-head {
    margin: 2px 2px 0;
    height: 20px;
    padding: 0 5px 0 3px;
    display: flex;
    align-items: center;
    justify-content: space-between;
    border: 1px solid #84aee5;
    border-radius: 2px;
    background: #eff6fe;
}
.tree-box {
    height: 156px;
    padding: 2px 3px 0 0;
    display: flex;
    justify-content: space-between;
}
.tree-tools {
    display: flex;
    gap: 3px;
    padding-top: 6px;
}
.nav-tree li {
    position: relative;
    height: 16px;
    line-height: 14px;
    padding-left: 23px;
}
.selected {
    display: inline-block;
    height: 16px;
    margin-left: -2px;
    padding: 0 6px 0 2px;
    background: #9db3de;
    color: #fff;
}
/* dotted connectors and the small expander boxes */
.nav-tree li::before, .mark-tree li::before {
    content: "";
    position: absolute;
    left: 12px;
    top: -8px;
    width: 9px;
    height: 16px;
    border-left: 1px dotted #888;
    border-bottom: 1px dotted #888;
}
.nav-tree > li:first-child::before, .mark-tree > li:first-child::before {
    top: 8px;
    height: 1px;
    border-left: none;
}
.plus::after, .minus::after {
    content: "";
    position: absolute;
    left: 8px;
    top: 3px;
    width: 9px;
    height: 9px;
    border: 1px solid #919191;
    border-radius: 1px;
    background: linear-gradient(#3c5fa0, #3c5fa0) center / 5px 1px no-repeat, #f4f4f4;
}
.plus::after {
    background: linear-gradient(#3c5fa0, #3c5fa0) center / 5px 1px no-repeat, linear-gradient(#3c5fa0, #3c5fa0) center / 1px 5px no-repeat, #f4f4f4;
}
.settings {
    flex: 1;
    background: #e3e3e3;
}
.settings h2 {
    height: 25px;
    padding: 1px 4px 0;
    display: flex;
    align-items: center;
    justify-content: space-between;
    border-bottom: 1px solid #cdcdcd;
    background: #e5e5e5;
    color: #555;
    font-size: 12px;
    font-weight: normal;
}
.row {
    display: flex;
    height: 21px;
    border-bottom: 1px solid #cdcdcd;
    background: #fff;
}
.row label {
    flex: 1;
    padding-left: 4px;
    line-height: 20px;
    border-right: 1px solid #cdcdcd;
}
.row div {
    width: 89px;
    padding: 1px;
    display: flex;
    align-items: center;
    justify-content: flex-end;
}
.row button {
    flex: 1;
    height: 18px;
    border: 1px solid #adadad;
    outline: 1px solid #e4e4e4;
    outline-offset: -3px;
    background: #f0f0f0;
}
input[type="checkbox"] {
    appearance: none;
    width: 13px;
    height: 13px;
    flex: none;
    border: 1px solid #222;
    background: #fff;
}
input[type="checkbox"]:checked {
    background: #fff url("data:image/svg+xml,%3Csvg xmlns='http://www.w3.org/2000/svg' width='11' height='11'%3E%3Cpath d='M1 5.500l3 3L10 2' fill='none' stroke='%23444' stroke-width='1.300'/%3E%3C/svg%3E") center no-repeat;
}
.row input[type="checkbox"] {
    margin: 0 2px 1px 0;
}
.hint {
    height: 95px;
}

/* document workspace */
.workspace {
    flex: 1;
    min-width: 0;
    display: flex;
    flex-direction: column;
}
.view-tabs {
    height: 23px;
    flex: none;
    padding: 3px 4px 0;
    display: flex;
    gap: 6px;
    font-family: Roboto, sans-serif;
    background: #bacde6;
}
.view-tabs button {
    padding: 0 9px;
}
.view-tabs .active, .list-tabs .active {
    background: linear-gradient(#f8fbff, #eaf2fc);
    border-radius: 3px 3px 0 0;
}
.toolbar-row {
    height: 26px;
    flex: none;
    background: #fbfbfb;
    display: flex;
}
.toolbar {
    display: flex;
    align-items: center;
    height: 26px;
    padding-left: 4px;
    background: linear-gradient(#fdfdfd, #efefef);
    font-size: 12px;
    white-space: nowrap;
    font-family: Roboto, sans-serif;
}
.toolbar button {
    width: 23px;
    height: 22px;
    display: flex;
    align-items: center;
    justify-content: center;
}
.toolbar .on {
    border: 1px solid #1a7fd8;
}
.toolbar .text {
    width: auto;
    padding: 0 5px;
}
.toolbar input {
    height: 22px;
    background: #fff;
    padding-left: 3px;
}
.toolbar label, .toolbar span {
    padding: 0 3px;
}
.toolbar .caret {
    margin: 0 3px;
}
.toolbar .off {
    color: #aaa;
}
.toolbar .zoom {
    width: 48px;
}
.toolbar .page-no {
    width: 34px;
    margin: 0 3px;
}
.toolbar .start-no {
    width: 30px;
    border: 1px solid #555;
    margin: 0 1px;
}
.grip {
    width: 2px;
    height: 15px;
    margin: 0 2px 0 3px;
    background: repeating-linear-gradient(#b0b0b0 0 2px, transparent 2px 4px);
}
.sep {
    width: 1px;
    height: 16px;
    margin: 0 2px;
    background: #bdbdbd;
}
.content {
    flex: 1;
    min-height: 0;
    display: flex;
    gap: 10px;
    border-bottom: 1px solid #d4d4d4;
}
.bookmarks {
    width: 240px;
    flex: none;
    display: flex;
    flex-direction: column;
    padding-bottom: 1px;
}
.side-tabs {
    height: 21px;
    display: flex;
    align-items: flex-end;
    padding-left: 2px;
    font-size: 11px;
}
.side-tabs button {
    width: 40px;
    height: 18px;
    border: 1px solid #dcdcdc;
    border-bottom: none;
}
.side-tabs .active {
    width: 69px;
    height: 20px;
    padding-bottom: 3px;
    background: #fff;
}
.side-frame {
    flex: 1;
    display: flex;
    padding: 1px 1px 1px 3px;
    border: 1px solid #dcdcdc;
    background: #fff;
}
.mark-tree {
    flex: 1;
    min-width: 0;
    border: 1px solid #828790;
}
.mark-tree li {
    position: relative;
    padding-left: 23px;
}
.mark-tree label {
    height: 16px;
    display: flex;
    align-items: center;
    gap: 1px;
    white-space: nowrap;
}
.mark-tree ul {
    margin-left: -5px;
}
.mark-tree > li.minus + li.minus::before {
    top: -40px;
    height: 48px;
}
.preview {
    flex: 1;
    min-width: 0;
    display: grid;
    grid-template-columns: 18px 1fr 17px;
    grid-template-rows: 22px 1fr 16px;
}
.ruler-h {
    grid-column: 2;
    padding-top: 4px;
    display: flex;
    justify-content: center;
    overflow: hidden;
}
.ruler-v {
    grid-column: 1;
    grid-row: 2;
    overflow: hidden;
}
.canvas {
    grid-column: 2;
    grid-row: 2;
    display: flex;
    justify-content: center;
    overflow: hidden;
    background: #a0a0a0;
}
.sheet {
    width: 764px;
    flex: none;
    padding: 1px 0 0 61px;
    border: solid #000;
    border-width: 0 1px;
    box-shadow: 0 0 8px #555;
    background: #fff;
    font-family: Lato, Calibri, sans-serif;
    font-size: 12px;
}
.sheet h3 {
    font-size: 14px;
    line-height: 18px;
    text-decoration: underline;
}
.sheet table {
    table-layout: fixed;
    border-collapse: collapse;
    line-height: 13px;
}
.sheet td {
    height: 13px;
    white-space: nowrap;
}
.sheet .code {
    font-size: 11px;
}
.sheet small {
    font-size: 8px;
    line-height: 1px;
}
.t-basic {
    width: 377px;
    margin: 6px 0 27px;
}
.t-basic .c-label { width: 201px; }
.t-basic .c-sign { width: 12px; }
.t-basic td:nth-child(2), .t-material td:nth-child(3) {
    text-align: center;
}
.t-basic td:last-child, .t-material td:nth-child(2), .t-material td:last-child {
    text-align: right;
}
.t-material {
    width: 301px;
    margin-bottom: 8px;
}
.t-material .c-label { width: 165px; }
.t-material .c-symbol { width: 40px; }
.t-material .c-sign { width: 24px; }
.t-material .c-value { width: 72px; }
.truss {
    margin: 10px 0 2px 12px;
}
.dim text {
    font: 12px "Open Sans", sans-serif;
    text-anchor: middle;
    fill: #222;
}
.bar rect {
    fill: #fff;
    stroke: #d0d0d0;
}
.bar text {
    font: 10px "Open Sans", sans-serif;
    text-anchor: middle;
    fill: #2a9f2a;
}
.t-girder {
    width: 368px;
}
.g1 { width: 76px; }
.g2 { width: 52px; }
.g3 { width: 20px; }
.g4 { width: 33px; }
.g5 { width: 38px; }
.g6 { width: 60px; }
.g7 { width: 24px; }
.g8 { width: 25px; }
.t-girder td:nth-child(2), .t-girder td:nth-child(4), .t-girder td:nth-child(7), .t-girder td:nth-child(9) {
    text-align: right;
}
.t-girder td:nth-child(3), .t-girder td:nth-child(8) {
    text-align: center;
}
.t-girder td:nth-child(5), .t-girder td:nth-child(10) {
    padding-left: 7px;
}
.scroll-v {
    grid-column: 3;
    grid-row: 2;
    display: flex;
    flex-direction: column;
    align-items: center;
    padding: 5px 0;
}
.thumb {
    width: 15px;
    height: 73px;
    margin: 29px 0 auto;
    background: #cdcdcd;
}
.scroll-h {
    grid-column: 2;
    display: flex;
    align-items: center;
    justify-content: space-between;
    padding: 0 5px;
}
.size-grip {
    height: 25px;
    flex: none;
    display: flex;
    align-items: center;
    justify-content: flex-end;
    padding: 4px 2px 0;
}
.list-tabs {
    height: 24px;
    flex: none;
    display: flex;
    gap: 6px;
    padding: 3px 4px 0 6px;
    background: #bacde6;
}
.list-tabs button {
    display: flex;
    align-items: center;
    gap: 9px;
    padding: 0 12px 2px 5px;
}
.list-tabs .close {
    margin-left: auto;
    padding: 0;
}
.status {
    height: 22px;
    flex: none;
    border-top: 1px solid #c8c6c4;
    background: #f3f2f1;
}
```
